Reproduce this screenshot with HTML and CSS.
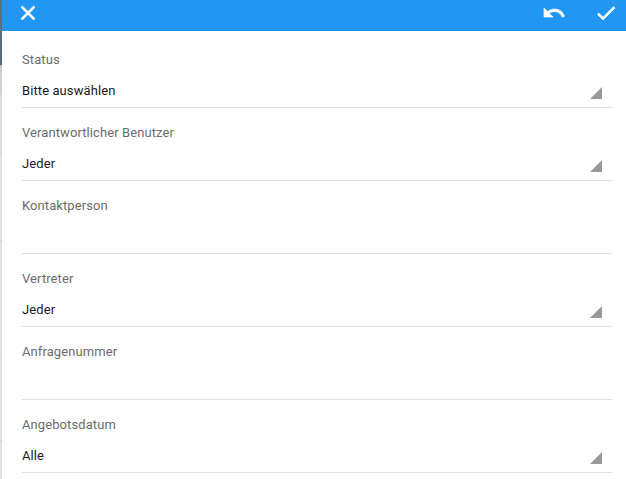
FILE: index.html
```html
<!DOCTYPE html>
<html lang="de">
<head>
<meta charset="utf-8">
<title>Filter</title>
<link rel="stylesheet" href="styles.css">
</head>
<body>
<div class="backdrop"></div>
<main class="panel">
  <header class="toolbar">
    <svg class="icon" viewBox="0 0 24 24"><path d="M19 6.41 17.59 5 12 10.59 6.41 5 5 6.41 10.59 12 5 17.59 6.41 19 12 13.41 17.59 19 19 17.59 13.41 12z"/></svg>
    <div class="actions">
      <svg class="icon" viewBox="0 0 24 24"><path d="M12.5 8c-2.65 0-5.05.99-6.9 2.6L2 7v9h9l-3.62-3.62c1.39-1.16 3.16-1.88 5.12-1.88 3.54 0 6.55 2.31 7.6 5.5l2.37-.78C21.08 11.03 17.15 8 12.5 8z"/></svg>
      <svg class="icon" viewBox="0 0 24 24"><path d="M9 16.17 4.83 12l-1.42 1.41L9 19 21 7l-1.41-1.41z"/></svg>
    </div>
  </header>
  <div class="form">
    <div class="field"><div class="label">Status</div><div class="value select">Bitte auswählen</div></div>
    <div class="field"><div class="label">Verantwortlicher Benutzer</div><div class="value select">Jeder</div></div>
    <div class="field"><div class="label">Kontaktperson</div><div class="value"></div></div>
    <div class="field"><div class="label">Vertreter</div><div class="value select">Jeder</div></div>
    <div class="field"><div class="label">Anfragenummer</div><div class="value"></div></div>
    <div class="field"><div class="label">Angebotsdatum</div><div class="value select">Alle</div></div>
  </div>
</main>
</body>
</html>
```
FILE: styles.css
```css
* { box-sizing: border-box; }
body {
  margin: 0;
  height: 479px;
  display: flex;
  overflow: hidden;
  background: #fff;
  font: 13px/20px Roboto, sans-serif;
  letter-spacing: 0.09px;
}
.backdrop {
  flex: 0 0 2px;
  background: linear-gradient(#607078 0, #546e7d 65px, #bdbdbd 65px, #cfcfcf 69px, #d2d2d2 95px, #dcdcdc 95px, #dcdcdc 157px, #e2e2e2 157px, #e2e2e2 240px, #d3d3d3 240px, #d3d3d3 241px, #e2e2e2 241px, #e2e2e2 357px, #d3d3d3 357px, #d3d3d3 358px, #e2e2e2 358px, #e2e2e2 440px, #d3d3d3 440px, #d3d3d3 441px, #e2e2e2 441px);
}
.panel { flex: 1; }
.toolbar {
  display: flex;
  justify-content: space-between;
  height: 31px;
  padding: 1px 8px 0 14px;
  background: #2196f3;
}
.actions { display: flex; gap: 28px; }
.icon {
  display: block;
  width: 24px;
  height: 24px;
  fill: #fff;
  stroke: #fff;
  stroke-width: 0.7px;
}
.form { padding: 4px 14px 0 20px; }
.field {
  height: 73px;
  padding-top: 15px;
  border-bottom: 1px solid #e0e0e0;
}
.label { color: #6b6b6b; }
.value {
  display: flex;
  justify-content: space-between;
  height: 20px;
  margin-top: 11px;
  padding-right: 10px;
  color: #1a1a1a;
}
.select::after {
  content: "";
  width: 12px;
  height: 12px;
  margin-top: 6px;
  background: #999;
  clip-path: polygon(100% 0, 100% 100%, 0 100%);
}
```
